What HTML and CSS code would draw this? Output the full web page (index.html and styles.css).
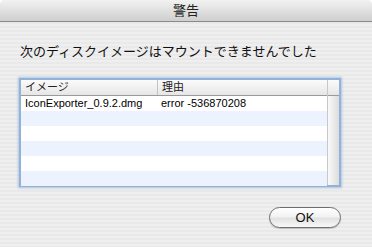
FILE: index.html
```html
<!DOCTYPE html>
<html lang="ja">
<head>
    <meta charset="UTF-8">
    <title>警告</title>
    <link rel="stylesheet" href="styles.css">
</head>
<body>
    <div class="window">
        <div class="titlebar">警告</div>

        <p class="message">次のディスクイメージはマウントできませんでした</p>

        <div class="list">
            <div class="table">
                <div class="row head">
                    <div class="cell name">イメージ</div>
                    <div class="cell reason">理由</div>
                </div>
                <div class="row">
                    <div class="cell name">IconExporter_0.9.2.dmg</div>
                    <div class="cell reason">error -536870208</div>
                </div>
                <div class="row"></div>
                <div class="row"></div>
                <div class="row"></div>
                <div class="row"></div>
                <div class="row"></div>
            </div>
            <div class="scroll">
                <div class="scroll-head"></div>
            </div>
        </div>

        <div class="buttons">
            <button class="ok">OK</button>
        </div>
    </div>
</body>
</html>
```

FILE: styles.css
```css
body {
    margin: 0;
    font-family: "Liberation Sans", "Noto Sans CJK JP", sans-serif;
    color: #000;
}

.window {
    width: 372px;
    height: 247px;
    background: repeating-linear-gradient(#efefef 0 2px, #e9e9e9 2px 4px);
    border-radius: 5px 5px 0 0;
    overflow: hidden;
}

.titlebar {
    height: 21px;
    line-height: 21px;
    text-align: center;
    font-size: 13px;
    color: #222;
    background: linear-gradient(#f2f2f2, #cfcfcf);
    border-bottom: 1px solid #8a8a8a;
}

.message {
    margin: 22px 0 18px 20px;
    font-size: 13px;
    line-height: 16px;
    color: #111;
}

.list {
    display: flex;
    box-sizing: border-box;
    width: 322px;
    height: 109px;
    margin-left: 19px;
    border: 2px solid #91b3da;
    box-shadow: 0 0 2px 1px rgba(120, 160, 210, 0.5);
    background: #fff;
}

.table {
    flex: 1;
}

.row {
    display: flex;
    height: 15px;
    line-height: 15px;
    font-size: 11px;
    background: #fff;
}

.row:nth-child(odd) {
    background: #ecf3fe;
}

.row.head {
    height: 15px;
    background: linear-gradient(#fbfbfb, #e6e6e6);
    border-bottom: 1px solid #9a9a9a;
    color: #222;
}

.cell {
    padding-left: 4px;
    white-space: nowrap;
}

.name {
    width: 132px;
}

.reason {
    flex: 1;
}

.head .name {
    border-right: 1px solid #c4c4c4;
}

.scroll {
    width: 11px;
    border-left: 1px solid #c8c8c8;
    background: linear-gradient(to right, #fafafa, #dcdcdc);
}

.scroll-head {
    height: 15px;
    background: linear-gradient(#fbfbfb, #e6e6e6);
    border-bottom: 1px solid #9a9a9a;
}

.buttons {
    display: flex;
    justify-content: flex-end;
    padding: 20px 31px 0 0;
}

.ok {
    width: 72px;
    height: 21px;
    padding: 0;
    font-family: "Liberation Sans", sans-serif;
    font-size: 13px;
    color: #111;
    background: linear-gradient(#ffffff 0%, #f2f2f2 45%, #e2e2e2 55%, #f8f8f8 100%);
    border: 1px solid #6e6e6e;
    border-radius: 11px;
    box-shadow: 0 1px 1px rgba(0, 0, 0, 0.2);
}
```
